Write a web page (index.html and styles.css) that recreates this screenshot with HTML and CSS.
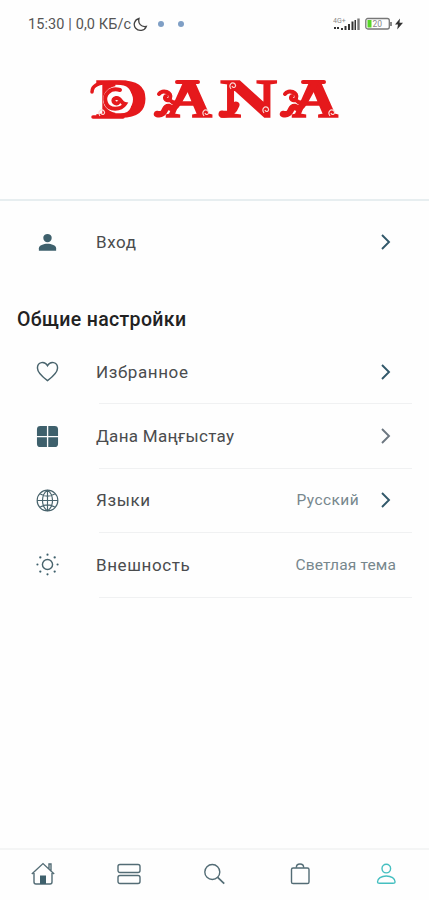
FILE: index.html
```
<!DOCTYPE html>
<html lang="ru">
<head>
<meta charset="utf-8">
<meta name="viewport" content="width=device-width">
<title>Dana</title>
<link rel="stylesheet" href="styles.css">
</head>
<body>
<div class="app">
  <header class="header">
    <div class="status">
      <span class="clock">15:30 | 0,0 КБ/с</span>
      <svg class="moon" width="15" height="15" viewBox="0 0 15 15"><path d="M6 1.5C4.8 6.5 8 10.3 13.3 9.4 11.5 13.8 5.8 14.8 2.7 11.3-.2 7.8 1.5 2.7 6 1.5Z"/></svg>
      <i class="dot"></i><i class="dot"></i>
      <span class="spacer"></span>
      <svg width="28" height="16" viewBox="0 0 28 16"><text class="net" x="0" y="7">4G+</text><path class="bars" d="M1 11h2v2H1zM4 11h2v2H4zM8 12h2v2H8zM11.5 10h2v4h-2zM15 8h2v6h-2zM18.5 5.5h2V14h-2z"/><path class="bars" d="M21.5 4h1.5v10h-1.5z"/><path fill="#777" d="M24.3 2.5h2.4V14h-2.4z"/></svg>
      <svg class="battery" width="28" height="14" viewBox="0 0 28 14"><rect x=".8" y="1.5" width="23.5" height="10.5" rx="2"/><path class="cap" d="M25 5h2v4h-2z"/><path class="charge" d="M2.5 3h4v7.5h-4z"/><text x="7.5" y="10">20</text></svg>
      <svg class="bolt" width="8" height="12" viewBox="0 0 8 12"><path d="M5 .5 0 6.6h3L2.2 11.5 8 4.8H4.5Z"/></svg>
    </div>
    <svg class="logo" width="260" height="54" viewBox="0 0 260 54">
      <g class="letters">
        <text x="13" y="45" textLength="52" lengthAdjust="spacingAndGlyphs">D</text>
        <text x="83" y="45" textLength="46" lengthAdjust="spacingAndGlyphs">A</text>
        <text x="137" y="45" textLength="57" lengthAdjust="spacingAndGlyphs">N</text>
        <text x="209" y="45" textLength="46" lengthAdjust="spacingAndGlyphs">A</text>
      </g>
      <ellipse class="hollow" cx="35" cy="27.5" rx="15" ry="13.5"/>
      <g class="swirls">
        <path d="M9 20C9 13 15 10.500 27 10.500H43M10 45H40" stroke-width="3.500"/>
        <path d="M37 18C27 15 20 23 23 31 26 39 38 38 42 32 37 31 38 25 33 26 28 27 31 33 35 31" stroke-width="4"/>
        <path d="M105 13 95 31Q91 38 86 35C80 34 84 44 74 42" stroke-width="6.500"/>
        <path d="M76 22C79 17 90 20 87 27 84 30 80 26 83 24M87 28Q91 33 96 28M94 10H115" stroke-width="4"/>
        <path d="M153 33C150 41 146 43 139 42" stroke-width="7"/>
        <path d="M231 13 221 31Q217 38 212 35C206 34 210 44 200 42" stroke-width="6.500"/>
        <path d="M202 22C205 17 216 20 213 27 210 30 206 26 209 24M213 28Q217 33 222 28M220 10H241" stroke-width="4"/>
      </g>
      <g class="curls"><path d="M17 44c-3-4 1-8 4-5 2 3-2 5-3 2M121 44c-3-4 1-8 4-5 2 3-2 5-3 2M148 17c-3-4 1-8 4-5 2 3-2 5-3 2M181 41c-3-4 1-8 4-5 2 3-2 5-3 2M247 44c-3-4 1-8 4-5 2 3-2 5-3 2"/></g>
    </svg>
  </header>
  <main>
    <div class="row login">
      <svg class="icon" viewBox="0 0 24 24"><g class="solid"><circle cx="12" cy="7.4" r="4.4"/><path d="M3 20.5v-2.4C3 15 8 13.400 12 13.400S21 15 21 18.100v2.400Z"/></g></svg>
      <span class="label">Вход</span>
      <svg class="chevron" viewBox="0 0 12 18"><path d="m2 2 7 7-7 7"/></svg>
    </div>
    <h1>Общие настройки</h1>
    <div class="row">
      <svg class="icon" viewBox="0 0 24 24"><path d="M12 21.500C8 18.500 1.500 13.600 1.500 8.300 1.500 2 9 .5 12 6c3-5.500 10.500-4 10.500 2.300 0 5.300-6.500 10.200-10.500 13.200Z"/></svg>
      <span class="label">Избранное</span>
      <svg class="chevron" viewBox="0 0 12 18"><path d="m2 2 7 7-7 7"/></svg>
    </div>
    <div class="row">
      <svg class="icon" viewBox="0 0 24 24"><g class="solid"><path d="M11.400 11.400H1V4.500Q1 1 4.500 1H11.400ZM12.800 1H19.500Q23 1 23 4.500V11.400H12.800ZM1 12.800h10.400V23H4.500Q1 23 1 19.500ZM12.800 12.800H23v6.700Q23 23 19.500 23h-6.700Z"/></g></svg>
      <span class="label mangystau">Дана Маңғыстау</span>
      <svg class="chevron muted" viewBox="0 0 12 18"><path d="m2 2 7 7-7 7"/></svg>
    </div>
    <div class="row">
      <svg class="icon globe" viewBox="0 0 24 24"><circle cx="12" cy="12" r="10.800"/><path d="M12 1.200v21.600M1.200 12h21.600M4 5c5 3 11 3 16 0M4 19c5-3 11-3 16 0M12 1.200c-7 5-7 16.600 0 21.600M12 1.200c7 5 7 16.600 0 21.600"/></svg>
      <span class="label">Языки</span>
      <span class="value">Русский</span>
      <svg class="chevron" viewBox="0 0 12 18"><path d="m2 2 7 7-7 7"/></svg>
    </div>
    <div class="row">
      <svg class="icon" viewBox="0 0 24 24"><circle cx="12" cy="12" r="5.300"/><g class="solid"><circle cx="12" cy="1.700" r="1.100"/><circle cx="12" cy="22.300" r="1.100"/><circle cx="1.500" cy="12" r="1.100"/><circle cx="22.500" cy="12" r="1.100"/><circle cx="4.500" cy="4.600" r="1.200"/><circle cx="19.500" cy="4.600" r="1.200"/><circle cx="4.500" cy="19.400" r="1.200"/><circle cx="19.500" cy="19.400" r="1.200"/></g></svg>
      <span class="label">Внешность</span>
      <span class="value theme">Светлая тема</span>
    </div>
  </main>
  <nav class="tabs">
    <svg viewBox="0 0 24 24"><path d="M.8 12 12 1.600 23.200 12M18 7V2h2v7M3 11v9q0 2 2 2h14q2 0 2-2v-9"/><path class="solid" d="M9 13.500h6V22H9z"/></svg>
    <svg viewBox="0 0 24 24"><rect x="1" y="2.500" width="22" height="8" rx="2"/><rect x="1" y="13.500" width="22" height="8" rx="2"/></svg>
    <svg viewBox="0 0 24 24"><circle cx="10.300" cy="10" r="7.500"/><path d="m15.700 15.400 6.500 6.200" stroke-width="1.700"/></svg>
    <svg viewBox="0 0 24 24"><rect x="3.500" y="6" width="17.500" height="15.500" rx="1.600"/><path d="M8.300 5.700c0-5 7.400-5 7.400 0"/></svg>
    <svg class="active" viewBox="0 0 24 24"><circle cx="12.300" cy="6.600" r="4.300"/><path d="M3.500 20C3.500 16.500 7.300 14 12.300 14s8.800 2.500 8.800 6q0 1.200-2 1.200H5.500q-2 0-2-1.200Z"/></svg>
  </nav>
</div>
</body>
</html>
```
FILE: styles.css
```
* { box-sizing: border-box; }
body { margin: 0; background: #fefefe; font-family: Roboto, "Noto Sans", sans-serif; }
.app { height: 900px; display: flex; flex-direction: column; overflow: hidden; }
.header { height: 201px; border-bottom: 2px solid #e7eef0; flex: none; }
.status { height: 48px; padding: 0 26px 0 28px; display: flex; align-items: center; color: #555; }
.clock { font-size: 14.5px; width: 104px; white-space: nowrap; letter-spacing: 0.1px; }
.moon { fill: none; stroke: #444; stroke-width: 1.3; margin-left: 1px; }
.dot { width: 6px; height: 6px; border-radius: 3px; background: #7f9fc5; margin-left: 10px; }
.dot + .dot { margin-left: 14px; }
.spacer { flex: 1; }
.net { font-size: 7px; fill: #888; }
.bars { fill: #333; }
.battery { margin: 0 2px 0 4px; }
.battery rect { fill: none; stroke: #777; stroke-width: 1.3; }
.battery .cap { fill: #888; }
.battery .charge { fill: #57d528; }
.battery text { font-size: 8.5px; fill: #888; }
.bolt { fill: #333; }
.logo { display: block; margin: 24px 0 0 83px; overflow: visible; }
.letters { font: bold 54px "Liberation Serif", serif; fill: #e5191c; stroke: #e5191c; stroke-width: 1.5; }
.hollow { fill: #fefefe; }
.swirls { fill: none; stroke: #e5191c; stroke-linecap: round; }
.curls { fill: none; stroke: #fbd9d5; stroke-width: 1.2; }
main { flex: 1; }
.row { position: relative; height: 64.4px; display: flex; align-items: center; padding: 0 37px 1px 36px; }
.row:not(.login)::after { content: ""; position: absolute; left: 99px; right: 17px; bottom: 0; height: 1px; background: #f0f1f2; }
.login { height: 82px; padding-bottom: 0; }
.icon { width: 23px; height: 23px; flex: none; fill: none; stroke: #48636c; stroke-width: 1.5; }
.globe { stroke-width: 1.2; }
.solid { fill: #3e606c; stroke: none; }
.label { margin-left: 37px; font-size: 17px; letter-spacing: 0.6px; color: #4a4c4e; flex: 1; white-space: nowrap; }
.mangystau { letter-spacing: 0.3px; }
.value { font-size: 15.5px; letter-spacing: 0.4px; color: #77878d; margin-right: 21px; white-space: nowrap; }
.theme { margin-right: -4px; letter-spacing: 0.15px; }
.chevron { width: 12px; height: 18px; fill: none; stroke: #31586a; stroke-width: 1.9; }
.chevron.muted { stroke: #6c7680; }
h1 { margin: 0; height: 57px; padding: 23px 0 0 17px; font-size: 19.5px; line-height: 28px; font-weight: 500; letter-spacing: 0.35px; color: #222; }
.tabs { height: 52px; padding-bottom: 3px; border-top: 2px solid #f4f5f5; display: flex; align-items: center; justify-content: space-around; }
.tabs svg { width: 24px; height: 24px; fill: none; stroke: #536c75; stroke-width: 1.4; }
.tabs .solid { fill: #3e606c; }
.tabs .active { stroke: #45bfc0; }
```
